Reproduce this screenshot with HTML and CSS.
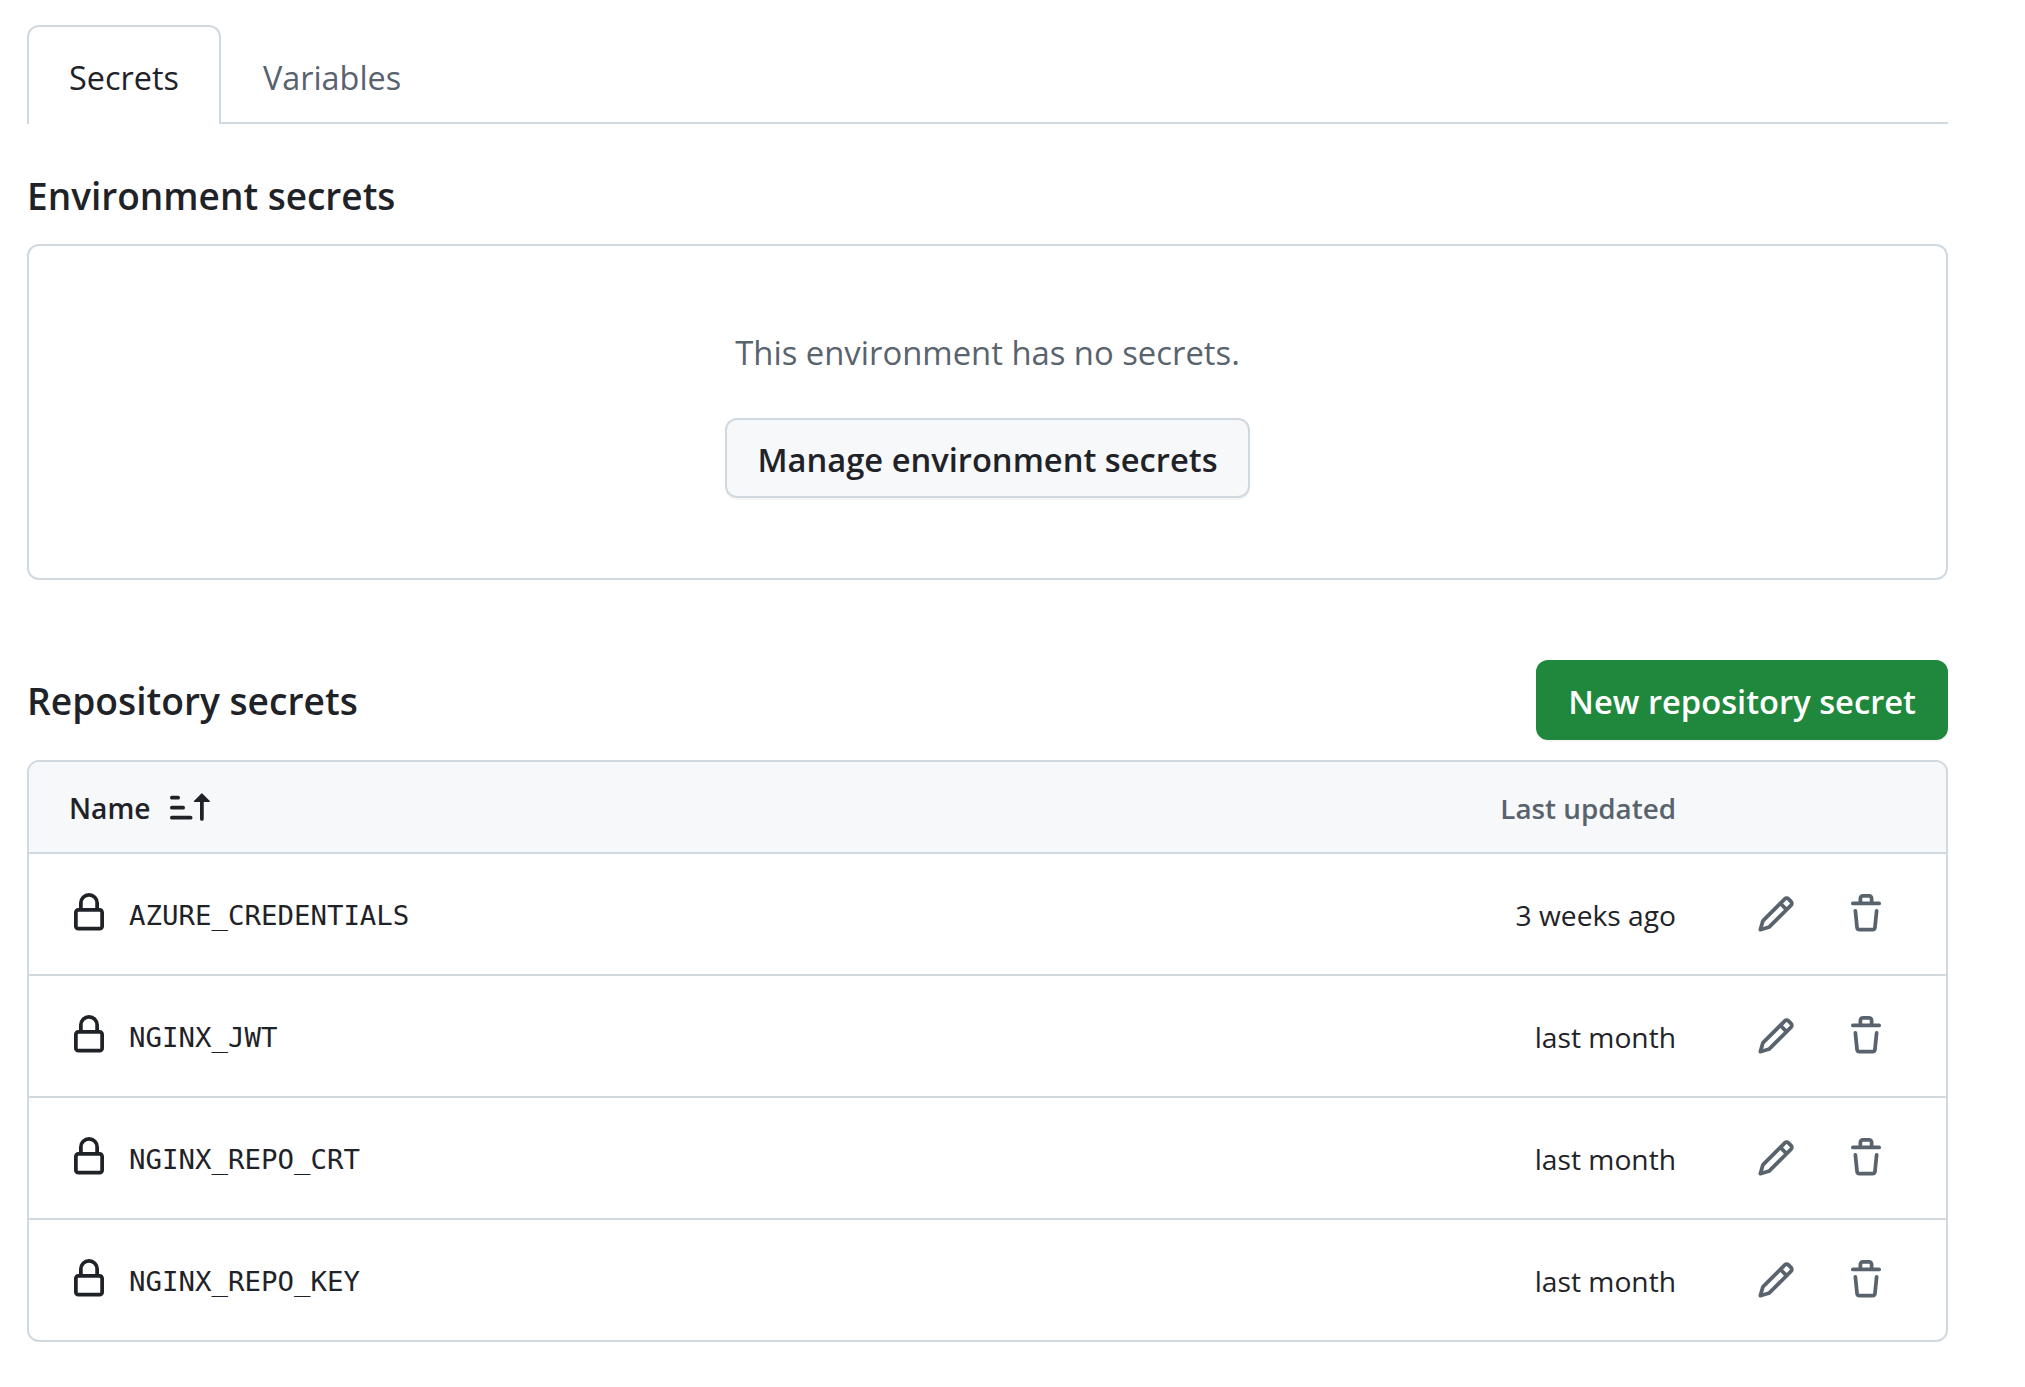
FILE: index.html
```html
<!DOCTYPE html>
<html>
<head>
  <title>Secrets</title>
  <link rel="stylesheet" href="styles.css">
</head>
<body>
  <div id="main">
    <div class="tabs">
      <div class="tab selected">Secrets</div>
      <div class="tab">Variables</div>
    </div>

    <h2 class="env-title">Environment secrets</h2>
    <div class="blank">
      <p>This environment has no secrets.</p>
      <div class="btn">Manage environment secrets</div>
    </div>

    <div class="repo-head">
      <h2>Repository secrets</h2>
      <div class="btn green">New repository secret</div>
    </div>

    <div class="box">
      <div class="row head">
        <div class="name"><span>Name</span> <svg class="icon sort" viewBox="0 0 16 16"><path d="m12.927 2.573 3 3A.25.25 0 0 1 15.75 6H13.5v6.75a.75.75 0 0 1-1.5 0V6H9.75a.25.25 0 0 1-.177-.427l3-3a.25.25 0 0 1 .354 0ZM0 12.25a.75.75 0 0 1 .75-.75h7.5a.75.75 0 0 1 0 1.5H.75a.75.75 0 0 1-.75-.75Zm0-4a.75.75 0 0 1 .75-.75h4.5a.75.75 0 0 1 0 1.5H.75A.75.75 0 0 1 0 8.25Zm0-4a.75.75 0 0 1 .75-.75h2.5a.75.75 0 0 1 0 1.5H.75A.75.75 0 0 1 0 4.25Z"/></svg></div>
        <div class="updated">Last updated</div>
      </div>

      <div class="row">
        <svg class="icon lock" viewBox="0 0 16 16"><path d="M4 4a4 4 0 0 1 8 0v2h.25c.966 0 1.75.784 1.75 1.75v5.5A1.75 1.75 0 0 1 12.25 15h-8.5A1.75 1.75 0 0 1 2 13.25v-5.5C2 6.784 2.784 6 3.75 6H4Zm8.25 3.5h-8.5a.25.25 0 0 0-.25.25v5.5c0 .138.112.25.25.25h8.5a.25.25 0 0 0 .25-.25v-5.5a.25.25 0 0 0-.25-.25ZM10.5 6V4a2.5 2.5 0 1 0-5 0v2Z"/></svg>
        <code>AZURE_CREDENTIALS</code>
        <div class="updated">3 weeks ago</div>
        <svg class="icon edit" viewBox="0 0 16 16"><path d="M11.013 1.427a1.75 1.75 0 0 1 2.474 0l1.086 1.086a1.75 1.75 0 0 1 0 2.474l-8.61 8.61c-.21.21-.47.364-.756.445l-3.251.93a.75.75 0 0 1-.927-.928l.929-3.25c.081-.286.235-.547.445-.758l8.61-8.61Zm.176 4.823L9.75 4.81l-6.286 6.287a.253.253 0 0 0-.064.108l-.558 1.953 1.953-.558a.253.253 0 0 0 .108-.064Zm1.238-3.763a.25.25 0 0 0-.354 0L10.811 3.75l1.439 1.44 1.263-1.263a.25.25 0 0 0 0-.354Z"/></svg>
        <svg class="icon trash" viewBox="0 0 16 16"><path d="M11 1.75V3h2.25a.75.75 0 0 1 0 1.5H2.75a.75.75 0 0 1 0-1.5H5V1.75C5 .784 5.784 0 6.75 0h2.5C10.216 0 11 .784 11 1.75ZM4.496 6.675l.66 6.6a.25.25 0 0 0 .249.225h5.19a.25.25 0 0 0 .249-.225l.66-6.6a.75.75 0 0 1 1.492.149l-.66 6.6A1.748 1.748 0 0 1 10.595 15h-5.19a1.75 1.75 0 0 1-1.741-1.575l-.66-6.6a.75.75 0 1 1 1.492-.15ZM6.5 1.75V3h3V1.75a.25.25 0 0 0-.25-.25h-2.5a.25.25 0 0 0-.25.25Z"/></svg>
      </div>

      <div class="row">
        <svg class="icon lock" viewBox="0 0 16 16"><path d="M4 4a4 4 0 0 1 8 0v2h.25c.966 0 1.75.784 1.75 1.75v5.5A1.75 1.75 0 0 1 12.25 15h-8.5A1.75 1.75 0 0 1 2 13.25v-5.5C2 6.784 2.784 6 3.75 6H4Zm8.25 3.5h-8.5a.25.25 0 0 0-.25.25v5.5c0 .138.112.25.25.25h8.5a.25.25 0 0 0 .25-.25v-5.5a.25.25 0 0 0-.25-.25ZM10.5 6V4a2.5 2.5 0 1 0-5 0v2Z"/></svg>
        <code>NGINX_JWT</code>
        <div class="updated">last month</div>
        <svg class="icon edit" viewBox="0 0 16 16"><path d="M11.013 1.427a1.75 1.75 0 0 1 2.474 0l1.086 1.086a1.75 1.75 0 0 1 0 2.474l-8.61 8.61c-.21.21-.47.364-.756.445l-3.251.93a.75.75 0 0 1-.927-.928l.929-3.25c.081-.286.235-.547.445-.758l8.61-8.61Zm.176 4.823L9.75 4.81l-6.286 6.287a.253.253 0 0 0-.064.108l-.558 1.953 1.953-.558a.253.253 0 0 0 .108-.064Zm1.238-3.763a.25.25 0 0 0-.354 0L10.811 3.75l1.439 1.44 1.263-1.263a.25.25 0 0 0 0-.354Z"/></svg>
        <svg class="icon trash" viewBox="0 0 16 16"><path d="M11 1.75V3h2.25a.75.75 0 0 1 0 1.5H2.75a.75.75 0 0 1 0-1.5H5V1.75C5 .784 5.784 0 6.75 0h2.5C10.216 0 11 .784 11 1.75ZM4.496 6.675l.66 6.6a.25.25 0 0 0 .249.225h5.19a.25.25 0 0 0 .249-.225l.66-6.6a.75.75 0 0 1 1.492.149l-.66 6.6A1.748 1.748 0 0 1 10.595 15h-5.19a1.75 1.75 0 0 1-1.741-1.575l-.66-6.6a.75.75 0 1 1 1.492-.15ZM6.5 1.75V3h3V1.75a.25.25 0 0 0-.25-.25h-2.5a.25.25 0 0 0-.25.25Z"/></svg>
      </div>

      <div class="row">
        <svg class="icon lock" viewBox="0 0 16 16"><path d="M4 4a4 4 0 0 1 8 0v2h.25c.966 0 1.75.784 1.75 1.75v5.5A1.75 1.75 0 0 1 12.25 15h-8.5A1.75 1.75 0 0 1 2 13.25v-5.5C2 6.784 2.784 6 3.75 6H4Zm8.25 3.5h-8.5a.25.25 0 0 0-.25.25v5.5c0 .138.112.25.25.25h8.5a.25.25 0 0 0 .25-.25v-5.5a.25.25 0 0 0-.25-.25ZM10.5 6V4a2.5 2.5 0 1 0-5 0v2Z"/></svg>
        <code>NGINX_REPO_CRT</code>
        <div class="updated">last month</div>
        <svg class="icon edit" viewBox="0 0 16 16"><path d="M11.013 1.427a1.75 1.75 0 0 1 2.474 0l1.086 1.086a1.75 1.75 0 0 1 0 2.474l-8.61 8.61c-.21.21-.47.364-.756.445l-3.251.93a.75.75 0 0 1-.927-.928l.929-3.25c.081-.286.235-.547.445-.758l8.61-8.61Zm.176 4.823L9.75 4.81l-6.286 6.287a.253.253 0 0 0-.064.108l-.558 1.953 1.953-.558a.253.253 0 0 0 .108-.064Zm1.238-3.763a.25.25 0 0 0-.354 0L10.811 3.75l1.439 1.44 1.263-1.263a.25.25 0 0 0 0-.354Z"/></svg>
        <svg class="icon trash" viewBox="0 0 16 16"><path d="M11 1.75V3h2.25a.75.75 0 0 1 0 1.5H2.75a.75.75 0 0 1 0-1.5H5V1.75C5 .784 5.784 0 6.75 0h2.5C10.216 0 11 .784 11 1.75ZM4.496 6.675l.66 6.6a.25.25 0 0 0 .249.225h5.19a.25.25 0 0 0 .249-.225l.66-6.6a.75.75 0 0 1 1.492.149l-.66 6.6A1.748 1.748 0 0 1 10.595 15h-5.19a1.75 1.75 0 0 1-1.741-1.575l-.66-6.6a.75.75 0 1 1 1.492-.15ZM6.5 1.75V3h3V1.75a.25.25 0 0 0-.25-.25h-2.5a.25.25 0 0 0-.25.25Z"/></svg>
      </div>

      <div class="row">
        <svg class="icon lock" viewBox="0 0 16 16"><path d="M4 4a4 4 0 0 1 8 0v2h.25c.966 0 1.75.784 1.75 1.75v5.5A1.75 1.75 0 0 1 12.25 15h-8.5A1.75 1.75 0 0 1 2 13.25v-5.5C2 6.784 2.784 6 3.75 6H4Zm8.25 3.5h-8.5a.25.25 0 0 0-.25.25v5.5c0 .138.112.25.25.25h8.5a.25.25 0 0 0 .25-.25v-5.5a.25.25 0 0 0-.25-.25ZM10.5 6V4a2.5 2.5 0 1 0-5 0v2Z"/></svg>
        <code>NGINX_REPO_KEY</code>
        <div class="updated">last month</div>
        <svg class="icon edit" viewBox="0 0 16 16"><path d="M11.013 1.427a1.75 1.75 0 0 1 2.474 0l1.086 1.086a1.75 1.75 0 0 1 0 2.474l-8.61 8.61c-.21.21-.47.364-.756.445l-3.251.93a.75.75 0 0 1-.927-.928l.929-3.25c.081-.286.235-.547.445-.758l8.61-8.61Zm.176 4.823L9.75 4.81l-6.286 6.287a.253.253 0 0 0-.064.108l-.558 1.953 1.953-.558a.253.253 0 0 0 .108-.064Zm1.238-3.763a.25.25 0 0 0-.354 0L10.811 3.75l1.439 1.44 1.263-1.263a.25.25 0 0 0 0-.354Z"/></svg>
        <svg class="icon trash" viewBox="0 0 16 16"><path d="M11 1.75V3h2.25a.75.75 0 0 1 0 1.5H2.75a.75.75 0 0 1 0-1.5H5V1.75C5 .784 5.784 0 6.75 0h2.5C10.216 0 11 .784 11 1.75ZM4.496 6.675l.66 6.6a.25.25 0 0 0 .249.225h5.19a.25.25 0 0 0 .249-.225l.66-6.6a.75.75 0 0 1 1.492.149l-.66 6.6A1.748 1.748 0 0 1 10.595 15h-5.19a1.75 1.75 0 0 1-1.741-1.575l-.66-6.6a.75.75 0 1 1 1.492-.15ZM6.5 1.75V3h3V1.75a.25.25 0 0 0-.25-.25h-2.5a.25.25 0 0 0-.25.25Z"/></svg>
      </div>
    </div>
  </div>
</body>
</html>
```

FILE: styles.css
```css
body {
  margin: 0;
  background: #fff;
  color: #1f2328;
  font-family: "Open Sans", "Noto Sans", sans-serif;
  font-size: 28.2px;
}

#main {
  width: 1921px;
  margin-left: 27px;
  padding-top: 25px;
}

.tabs {
  display: flex;
  height: 99px;
  border-bottom: 2px solid #d1d9e0;
  box-sizing: border-box;
  font-size: 32.4px;
}

.tab {
  padding: 0 40px 0 42px;
  height: 99px;
  line-height: 105px;
  box-sizing: border-box;
  color: #59636e;
}

.tab.selected {
  color: #1f2328;
  background: #fff;
  padding: 0 40px;
  border: 2px solid #d1d9e0;
  border-bottom: 0;
  border-radius: 12px 12px 0 0;
  line-height: 101px;
}

h2 {
  margin: 0;
  font-size: 37px;
  font-weight: 600;
  line-height: 44px;
}

.env-title {
  margin-top: 50px;
  margin-bottom: 26px;
}

.blank {
  height: 336px;
  box-sizing: border-box;
  border: 2px solid #d1d9e0;
  border-radius: 12px;
  text-align: center;
  padding-top: 87px;
  font-size: 32.8px;
}

.blank p {
  margin: 0 0 45px;
  color: #59636e;
  line-height: 40px;
}

.btn {
  display: inline-block;
  height: 80px;
  line-height: 80px;
  padding: 0 30px;
  box-sizing: border-box;
  border: 2px solid #d1d9e0;
  border-radius: 12px;
  background: #f6f8fa;
  font-size: 32.7px;
  font-weight: 600;
  box-shadow: 0 2px 0 rgba(31, 35, 40, 0.04);
}

.btn.green {
  background: #1f883d;
  border-color: #1f883d;
  color: #fff;
}

.repo-head {
  display: flex;
  justify-content: space-between;
  align-items: center;
  margin-top: 80px;
  margin-bottom: 20px;
}

.repo-head h2 {
  font-size: 37.2px;
  padding-top: 2px;
}

.box {
  border: 2px solid #d1d9e0;
  border-radius: 12px;
  overflow: hidden;
}

.row {
  display: flex;
  align-items: center;
  height: 122px;
  box-sizing: border-box;
  border-top: 2px solid #d1d9e0;
  padding-left: 40px;
}

.row.head {
  height: 90px;
  border-top: 0;
  background: #f6f8fa;
  font-weight: 600;
}

.name {
  display: flex;
  align-items: center;
  gap: 19px;
  flex: 1;
}

.name span, .updated, code {
  padding-top: 2px;
}

.row.head .updated {
  color: #59636e;
  font-size: 27.8px;
  margin-right: 270px;
}

.icon {
  width: 40px;
  height: 40px;
  fill: currentColor;
  flex: none;
}

.lock {
  margin-right: 20px;
  margin-bottom: 2px;
}

code {
  flex: 1;
  font-family: "DejaVu Sans Mono", monospace;
  font-size: 27.4px;
}

.edit {
  margin-left: 80px;
  color: #59636e;
}

.trash {
  margin-left: 50px;
  margin-right: 60px;
  color: #59636e;
}
```
